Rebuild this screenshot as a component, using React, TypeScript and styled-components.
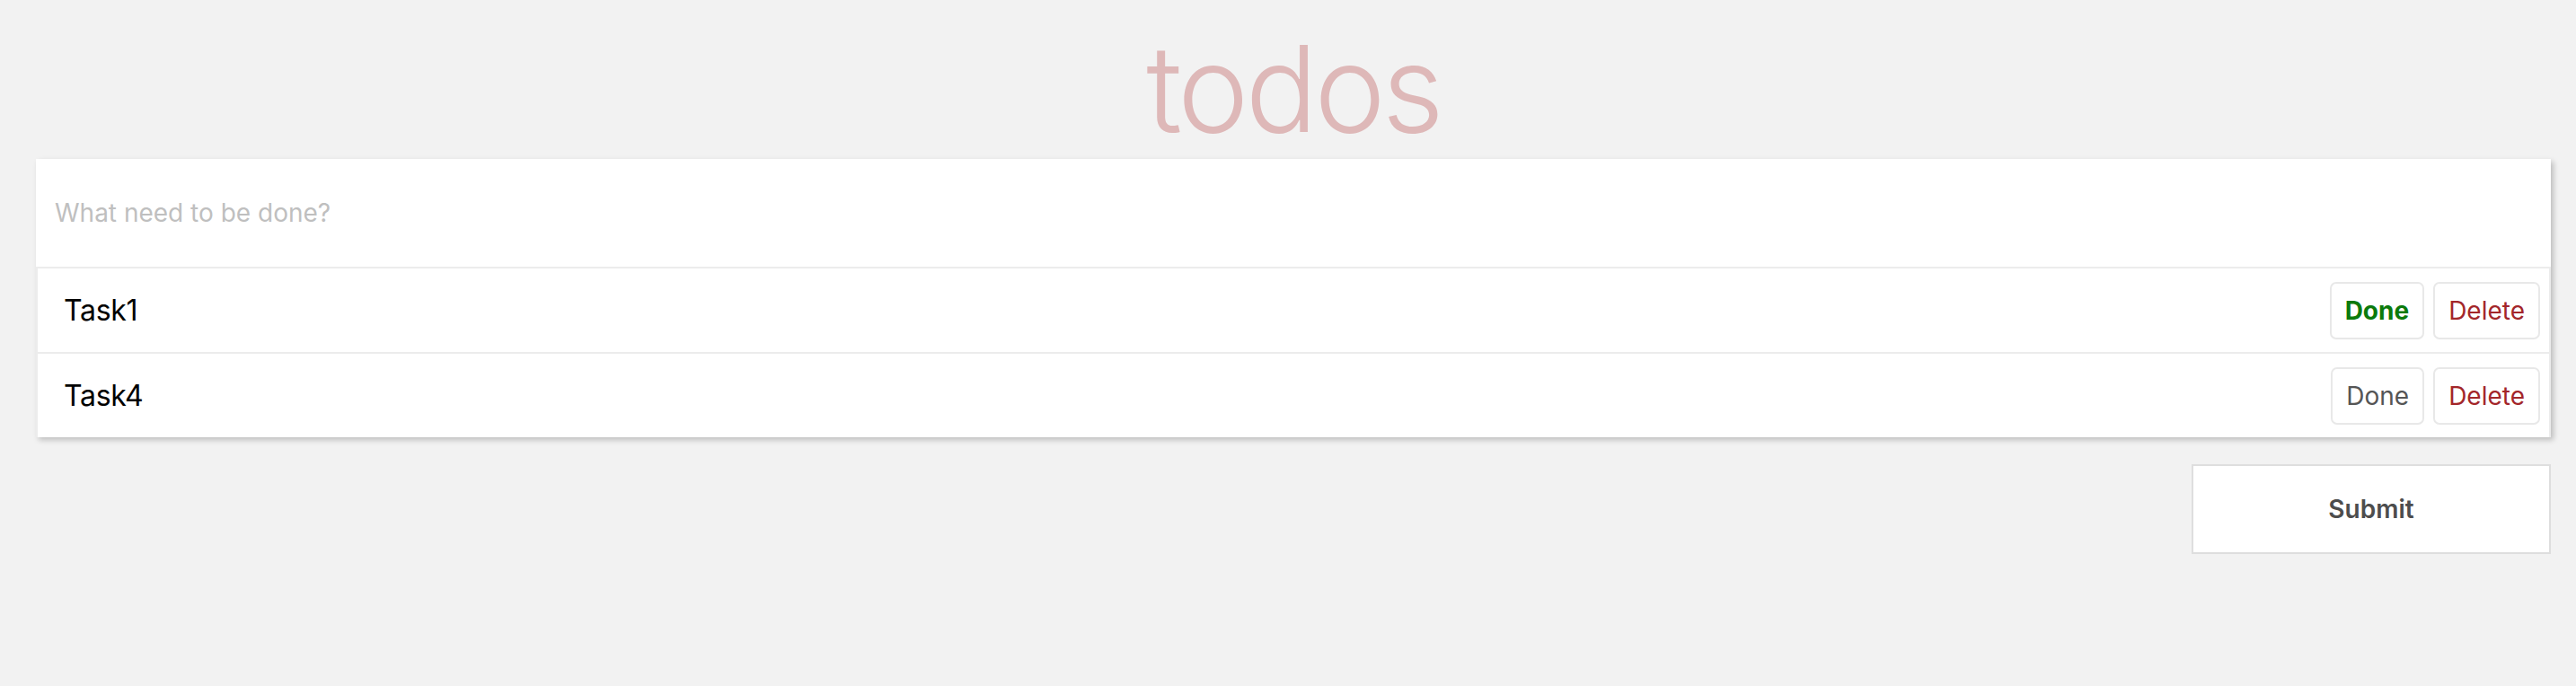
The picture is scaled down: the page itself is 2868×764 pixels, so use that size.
import React from "react";
import styled, { createGlobalStyle } from "styled-components";

const GlobalStyle = createGlobalStyle`
  html, body {
    margin: 0;
    padding: 0;
    background: #f2f2f2;
  }
  body {
    font-family: Inter, "Noto Sans", "Liberation Sans", sans-serif;
    -webkit-font-smoothing: antialiased;
  }
  * { box-sizing: border-box; }
`;

const Page = styled.main`
  width: 2800px;
  margin-left: 40px;
  display: flex;
  flex-direction: column;
  height: 764px;
`;

const Title = styled.h1`
  margin: 0;
  padding-top: 31px;
  height: 177px;
  text-align: center;
  font-size: 134px;
  line-height: 134px;
  font-weight: 300;
  letter-spacing: -4px;
  color: #deb8b8;
`;

const Card = styled.section`
  background: #fff;
  box-shadow: 3px 3px 6px rgba(0, 0, 0, 0.22);
  display: flex;
  flex-direction: column;
`;

const NewTodo = styled.input`
  height: 120px;
  border: none;
  outline: none;
  padding: 0 0 0 21px;
  font-family: inherit;
  font-size: 28px;
  color: #4d4d4d;
  background: #fff;
  &::placeholder {
    color: #bfbfbf;
  }
`;

const List = styled.ul`
  list-style: none;
  margin: 0;
  padding: 0;
`;

const Row = styled.li`
  display: flex;
  align-items: center;
  height: 95px;
  padding: 0 10px 0 29px;
  border: 2px solid #ececec;
  border-bottom: none;
  gap: 10px;
`;

const TaskName = styled.span`
  flex: 1;
  font-size: 32px;
  letter-spacing: -0.3px;
  color: #000;
`;

const ActionButton = styled.button<{ $tone: "done" | "idle" | "delete" }>`
  font-family: inherit;
  font-size: 28px;
  line-height: 34px;
  padding: 13px 15px;
  border: 2px solid #e8e8e8;
  border-radius: 7px;
  background: #fff;
  cursor: pointer;
  font-weight: ${(p) => (p.$tone === "done" ? 700 : 400)};
  color: ${(p) =>
    p.$tone === "done" ? "#0b7a0b" : p.$tone === "delete" ? "#a3262a" : "#555"};
`;

const Footer = styled.div`
  display: flex;
  justify-content: flex-end;
  margin-top: 30px;
`;

const Submit = styled.button`
  width: 400px;
  height: 100px;
  background: #fff;
  border: 2px solid #dedede;
  font-family: inherit;
  font-size: 28px;
  font-weight: 600;
  color: #4d4d4d;
  cursor: pointer;
`;

const todos = [
  { id: 1, name: "Task1", done: true },
  { id: 4, name: "Task4", done: false },
];

export default function App() {
  return (
    <>
      <GlobalStyle />
      <Page>
        <Title>todos</Title>
        <Card>
          <NewTodo placeholder="What need to be done?" />
          <List>
            {todos.map((t) => (
              <Row key={t.id}>
                <TaskName>{t.name}</TaskName>
                <ActionButton $tone={t.done ? "done" : "idle"}>Done</ActionButton>
                <ActionButton $tone="delete">Delete</ActionButton>
              </Row>
            ))}
          </List>
        </Card>
        <Footer>
          <Submit>Submit</Submit>
        </Footer>
      </Page>
    </>
  );
}
